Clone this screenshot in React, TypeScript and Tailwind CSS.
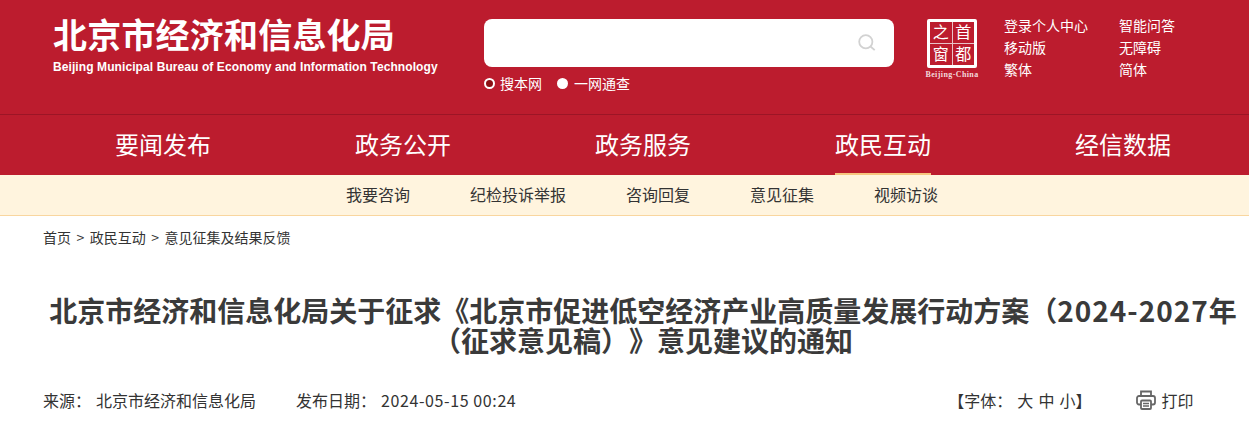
const cjk = "font-['Microsoft_YaHei','Noto_Sans_CJK_SC',sans-serif]";

function Printer() {
  return (
    <svg width="20" height="20" viewBox="0 0 20 20" fill="none" stroke="#666" strokeWidth="1.8">
      <path d="M5 6V1.5h10V6" />
      <path d="M5 14.5H3a2 2 0 0 1-2-2V8a2 2 0 0 1 2-2h14a2 2 0 0 1 2 2v4.5a2 2 0 0 1-2 2h-2" />
      <rect x="5" y="10.5" width="10" height="8.5" rx="1" />
      <path d="M7 13.5h6M7 16h6" strokeWidth="1.4" />
    </svg>
  );
}

function Logo() {
  return (
    <div className="flex flex-col items-center w-[56px]">
      <div className="w-[50px] h-[49px] border-[3px] rounded-[2px] border-white grid grid-cols-2 grid-rows-2 gap-px bg-[#e8c2c8] text-white text-[16px] leading-none font-['Liberation_Serif','Noto_Sans_CJK_SC',serif]">
        <div className="bg-[#bc1c2e] flex items-center justify-center">之</div>
        <div className="bg-[#bc1c2e] flex items-center justify-center">首</div>
        <div className="bg-[#bc1c2e] flex items-center justify-center">窗</div>
        <div className="bg-[#bc1c2e] flex items-center justify-center">都</div>
      </div>
      <div className="text-[8px] leading-[10px] mt-[2px] font-bold tracking-[0.4px] text-[#f3d9dc] font-['Liberation_Serif',serif] whitespace-nowrap">Beijing-China</div>
    </div>
  );
}

export default function App() {
  const nav = ["要闻发布", "政务公开", "政务服务", "政民互动", "经信数据"];
  const sub = ["我要咨询", "纪检投诉举报", "咨询回复", "意见征集", "视频访谈"];
  return (
    <div className={`${cjk} [text-spacing-trim:space-all] w-[1249px] h-[421px] overflow-hidden bg-white text-[#333]`}>
      <header className="h-[115px] bg-[#bc1c2e] border-b border-[#9c1526] flex text-white">
        <div className="w-[431px] ml-[53px] pt-[13px] shrink-0">
          <div className="text-[34px] leading-[42px] font-bold tracking-[0.2px] whitespace-nowrap">北京市经济和信息化局</div>
          <div className="text-[12px] leading-[16px] mt-[4px] font-bold tracking-[0.09px] whitespace-nowrap font-['Liberation_Sans',sans-serif]">Beijing Municipal Bureau of Economy and Information Technology</div>
        </div>
        <div className="w-[410px] pt-[19px] shrink-0">
          <div className="h-[48px] bg-white rounded-[8px] flex items-center justify-end pr-[18px]">
            <svg width="18" height="18" viewBox="0 0 18 18" fill="none" stroke="#d2d2d2" strokeWidth="1.8">
              <circle cx="7.8" cy="7.8" r="6.6" />
              <path d="M12.5 12.5l4.2 3.6" />
            </svg>
          </div>
          <div className="flex items-center h-[20px] mt-[6px] text-[14px]">
            <span className="w-[11px] h-[11px] rounded-full border-2 border-white bg-[#8c0f14]" />
            <span className="ml-[5px]">搜本网</span>
            <span className="w-[11px] h-[11px] rounded-full bg-white ml-[15px]" />
            <span className="ml-[6px]">一网通查</span>
          </div>
        </div>
        <div className="ml-[30px] pt-[19px] shrink-0"><Logo /></div>
        <div className="ml-[24px] pt-[14px] grid grid-cols-[115px_auto] auto-rows-[22px] text-[14px] leading-[22px] shrink-0">
          <span>登录个人中心</span><span>智能问答</span>
          <span>移动版</span><span>无障碍</span>
          <span>繁体</span><span>简体</span>
        </div>
      </header>
      <nav className="h-[60px] bg-[#bc1c2e] flex pl-[43px] text-white text-[24px]">
        {nav.map((n, i) => (
          <div key={n} className="w-[240px] flex justify-center">
            <span className={`h-[60px] leading-[58px] ${i === 3 ? "border-b-2 border-[#f7c67f]" : ""}`}>{n}</span>
          </div>
        ))}
      </nav>
      <div className="h-[41px] bg-[#fff4de] border-b border-[#f9d69f] flex justify-center gap-[60px] pl-[35px] text-[16px] leading-[39px]">
        {sub.map((s) => <span key={s}>{s}</span>)}
      </div>
      <div className="pl-[43px] pt-[10px] text-[14px] leading-[22px] flex gap-[5.5px]">
        <span>首页</span><span>&gt;</span><span>政民互动</span><span>&gt;</span><span>意见征集及结果反馈</span>
      </div>
      <h1 className="mt-[47px] h-[60px] text-center text-[28px] leading-[30px] font-bold text-[#3a3a3a] pl-[37px] whitespace-nowrap">
        北京市经济和信息化局关于征求《北京市促进低空经济产业高质量发展行动方案（<span className="tracking-[1px]">2024-2027</span>年<br />（征求意见稿）》意见建议的通知
      </h1>
      <div className="mt-[33px] pl-[43px] flex items-center h-[24px] text-[16px] leading-[24px]">
        <span>来源：</span><span className="ml-[5px]">北京市经济和信息化局</span>
        <span className="ml-[40px]">发布日期：</span><span className="ml-[5px] tracking-[0.6px]">2024-05-15 00:24</span>
        <span className="ml-[432px]">【字体：</span>
        <span className="ml-[5px] flex gap-[5px]"><span>大</span><span>中</span><span>小</span></span>
        <span>】</span>
        <span className="ml-[45px] flex items-center gap-[5px]"><Printer /><span>打印</span></span>
      </div>
    </div>
  );
}
